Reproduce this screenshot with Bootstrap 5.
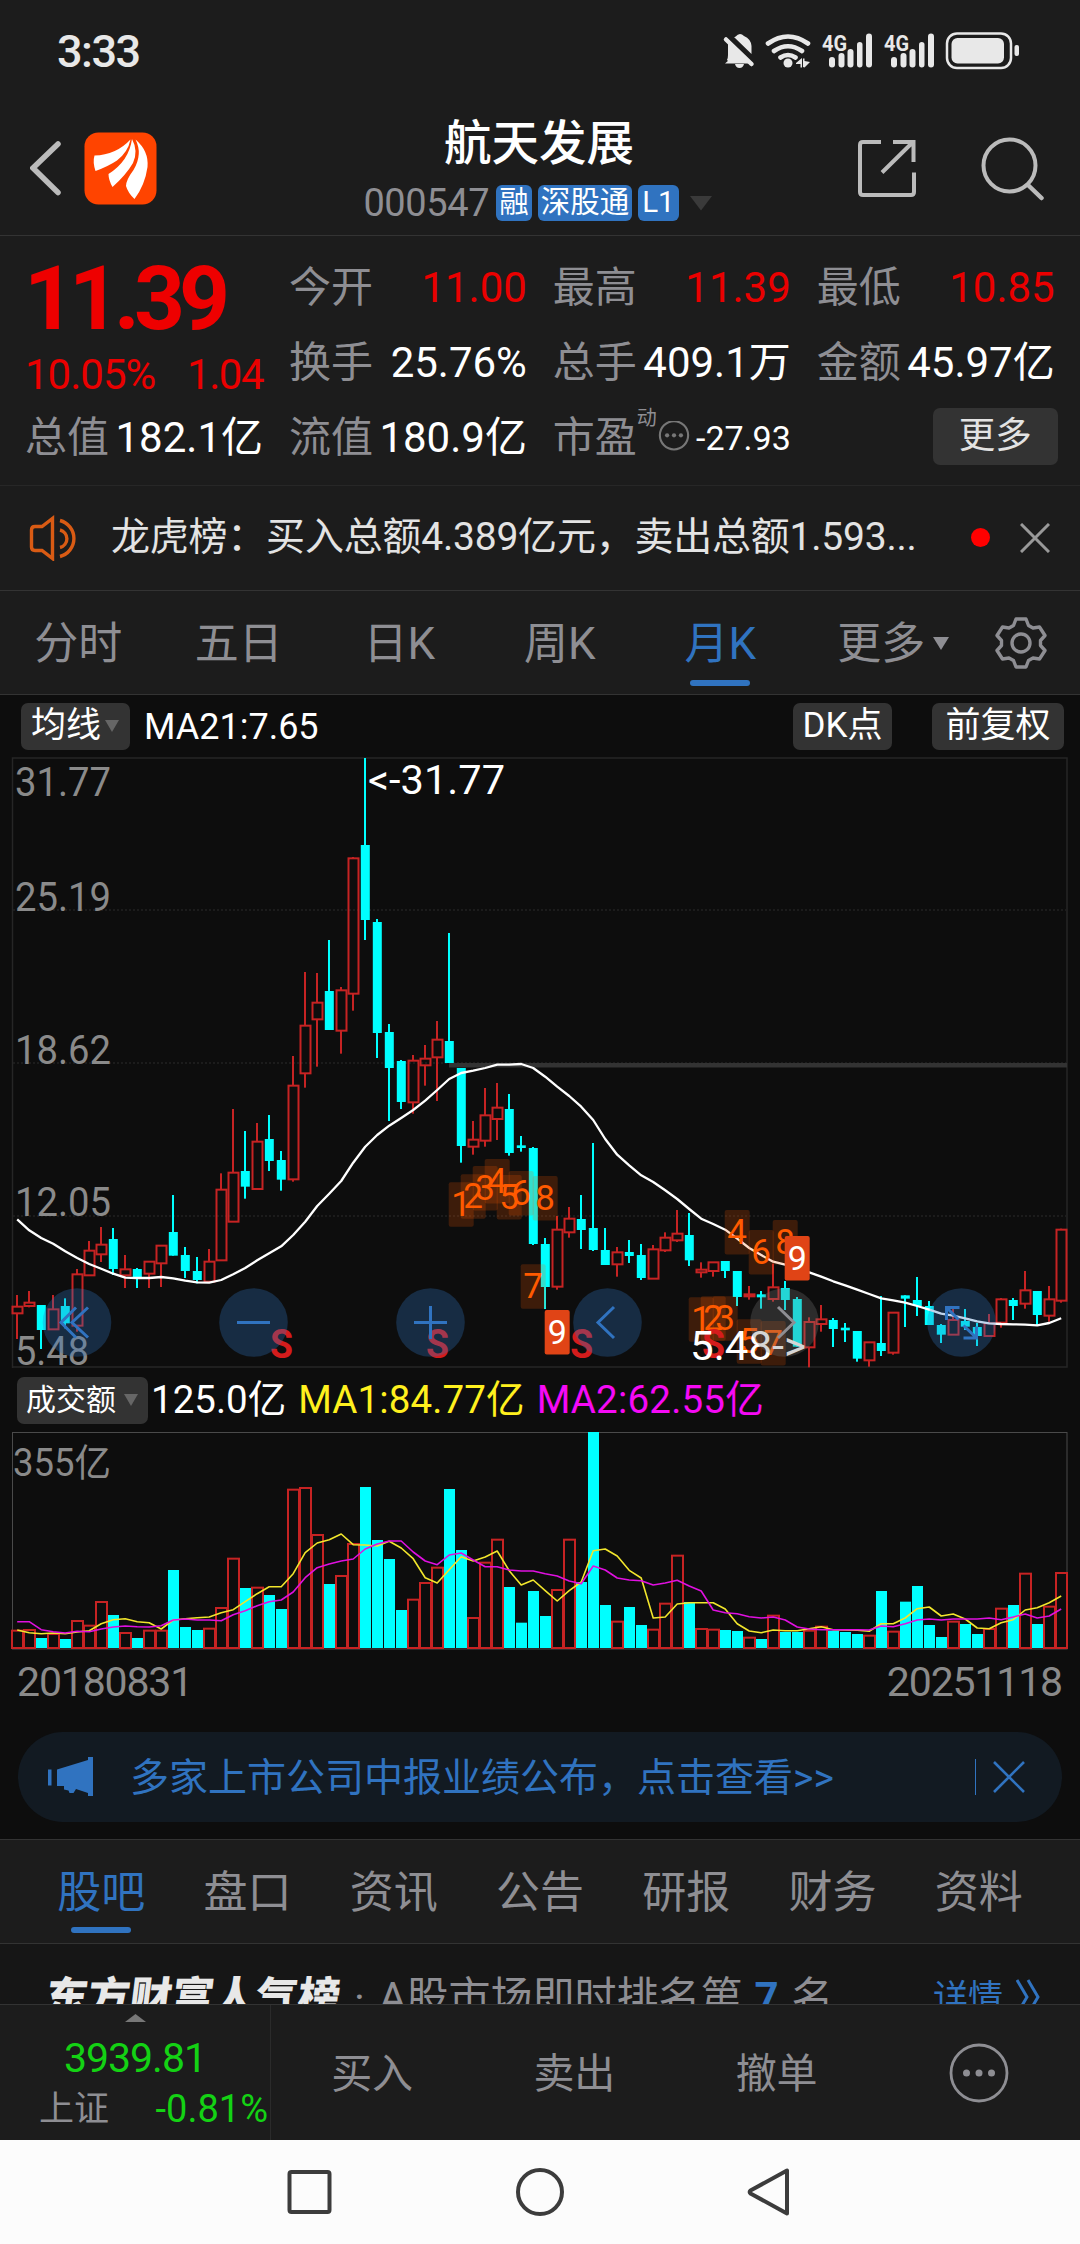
<!DOCTYPE html>
<html lang="zh-CN" data-bs-theme="dark">
<head>
<meta charset="utf-8">
<meta name="viewport" content="width=device-width, initial-scale=1">
<title>航天发展 000547</title>
<link href="https://cdn.jsdelivr.net/npm/bootstrap@5.3.0/dist/css/bootstrap.min.css" rel="stylesheet">
<style>
:root{--gray:#8e8e93;--blue:#3073c0;--line:#333}
body{width:1080px;height:2244px;margin:0;overflow:hidden;background:#1c1c1c;color:#fff;font-family:Roboto,"Noto Sans CJK SC",sans-serif;font-size:42px;line-height:1}
svg{display:block;flex:none}
.txt-gray{color:var(--gray)}.txt-blue{color:var(--blue)}.txt-red{color:#ea0000}.txt-green{color:#14d214}.txt-soft{color:#e3e3e3}
.statusbar{height:102px;padding:0 57px 0 57px}
.clock{font-size:45px;font-weight:500;color:#e8e8e8;letter-spacing:-1.5px}
.topbar{height:134px;border-bottom:1px solid var(--line);padding:0 36px 0 30px}
.title-block{margin-left:64px;margin-top:11px}
.stock-name{font-size:47.5px;font-weight:500;height:62px;line-height:62px}
.stock-code{font-size:38px;letter-spacing:-.4px}
.tag{background:var(--blue);border-radius:6px;height:36px;line-height:35px;font-size:29.5px;padding:0 3px;color:#fff}
.tri{width:0;height:0;border-left:7.5px solid transparent;border-right:7.5px solid transparent;border-top:12px solid #666}
.quote{height:250px;border-bottom:1px solid #272727;padding:14px 26px 0 25px;display:grid;grid-template-columns:238px 238px 238px 238px;column-gap:25.9px;grid-template-rows:75px 75px 75px}
.price-box{grid-row:1 / span 2;position:relative}
.price{font-size:89px;font-weight:700;letter-spacing:-6px;color:#ee0000;height:97px;line-height:97px;padding-left:1px;margin-left:-2px}
.change{font-size:42px;height:52px;line-height:56px;letter-spacing:-1px}
.small-val{font-size:34px}
.sup-mark{font-size:20px;align-self:flex-start;margin-top:8px}
.more-btn{width:125px;height:57px;line-height:50px;border-radius:7px;background:#333;font-size:36.5px;color:#e3e3e3;padding:0;border:0;margin-right:-3px;margin-top:-3px}
.notice{height:105px;border-bottom:1px solid var(--line);padding:0 30px 1px 29px;font-size:39px}
.notice-text{margin-left:28px;letter-spacing:-.22px}
.dot{width:19px;height:19px;background:#f00;border-radius:50%}
.periods{height:104px;border-bottom:1px solid var(--line);font-size:44px}
.period{width:160.5px;height:103px;position:relative;padding-top:2px;left:-2px}
.bar-mark{position:absolute;width:60px;height:6px;border-radius:3px;background:var(--blue);left:50%;margin-left:-30px;bottom:8px}
.chart-zone{background:#0d0d0d;height:1144px}
.ind-row{height:62px;padding:0 16px 0 21px}
.chip{background:#333;border-radius:7px;height:47px;font-size:35px;line-height:46px}
.vol-head{height:64px;padding-left:17px;font-size:38.5px}
.dates{height:82px;padding:0 18px 18px 17px;font-size:41px;color:#8a8a8a}
.banner{height:90px;margin:0 18px;border-radius:45px;background:#121a22;padding:0 37px 0 30px;font-size:39px}
.vline{width:1px;height:36px;background:var(--blue)}
.info-tabs{height:105px;border-top:1px solid var(--line);border-bottom:1px solid var(--line);padding:2px 28px 0;font-size:44px}
.info-tabs .bar-mark{bottom:10px}
.rank{height:60px;background:#161616;overflow:hidden;padding:33px 40px 0 46px;font-size:42px;white-space:nowrap}
.rank-title{font-weight:900;font-size:42px;color:#e8e8e8;transform:skewX(-7deg)}
.trade{height:136px;border-top:1px solid var(--line);font-size:41px;color:var(--gray)}
.index-box{width:271px;border-right:1px solid #2b2b2b}
.sysnav{height:104px;background:#fcfcfc}
</style>
</head>
<body class="d-flex flex-column">

<div class="statusbar d-flex align-items-center justify-content-between flex-shrink-0">
  <span class="clock">3:33</span>
  <svg width="302" height="44" viewBox="720 29 302 44" fill="#e8e8e8">
    <path d="M728 62V60l-4 3.5h24L727 43v12q0 3-1 5z"/><path d="M734 37q3-3 5-3t4 2q7 3 7.500 10v8L733 37z"/><path d="M734 64h9q-1 4-4.500 4t-4.500-4z"/>
    <path d="M725 39.500l25.500 24.500" stroke="#e8e8e8" stroke-width="4.500" stroke-linecap="round"/>
    <g fill="none" stroke="#e8e8e8" stroke-width="4.600" stroke-linecap="round"><path d="M767 43.500q20-14 40 0M773 51q14-9.500 28 0M779.500 57.500q7.500-5 15 0"/></g>
    <circle cx="787" cy="63" r="4.500"/><path d="M795 63l6-5v9.500h-1.500V64H795zM802 67V58.500h1.500V61L809 62l-5.500 5.500z"/>
    <g id="sig"><text x="821" y="51" font-size="22" font-weight="700" textLength="25" lengthAdjust="spacingAndGlyphs">4G</text>
    <rect x="828" y="57" width="6" height="10.500" rx="3"/><rect x="837.500" y="53" width="6" height="14.500" rx="3"/><rect x="846.500" y="49" width="6" height="18.500" rx="3"/><rect x="856" y="42" width="5.500" height="25.500" rx="2.750"/><rect x="865" y="33.500" width="6" height="34" rx="3"/></g>
    <use href="#sig" x="62"/>
    <rect x="946" y="33.500" width="64" height="34.500" rx="10" fill="none" stroke="#e8e8e8" stroke-width="2.500"/><rect x="950.500" y="38" width="52.500" height="25.500" rx="6"/><rect x="1013.500" y="45" width="4.500" height="11" rx="2"/>
  </svg>
</div>

<header class="topbar d-flex justify-content-between flex-shrink-0">
  <svg width="128" height="75" viewBox="30 131 128 75" style="margin-top:29px">
    <path d="M58 144L33 168l25 24.500" fill="none" stroke="#bbb" stroke-width="5.500" stroke-linecap="round"/>
    <rect x="84.500" y="132.500" width="72" height="72" rx="14" fill="#ff4400"/>
    <g fill="#fff"><path d="M94.500 155.500Q116 155 130.500 139.500Q128 152 117 160.500Q108 166.500 95.500 171Q92.500 162 94.500 155.500z"/><path d="M132 139Q138.500 151 133 163Q126 175 112.500 187Q108.500 180 108.500 174Q129 161 132 139z"/><path d="M135.500 139.500Q149 151 147.500 167Q145 185 134.500 199Q128 193 126 186Q126 180 133.500 170Q143 154 135.500 139.500z"/></g>
  </svg>
  <div class="title-block d-flex flex-column align-items-center">
    <div class="stock-name">航天发展</div>
    <div class="d-flex align-items-center txt-gray" style="height:56px;margin-left:-2px">
      <span class="stock-code">000547</span><span class="tag" style="margin-left:7px">融</span><span class="tag" style="margin-left:6px">深股通</span><span class="tag" style="margin-left:6px;padding:0 4px">L1</span>
      <svg width="24" height="16" viewBox="0 0 24 16" style="margin-left:10px"><path d="M1 1h22L12 15.500z" fill="#3a3a3a"/></svg>
    </div>
  </div>
  <svg width="188" height="66" viewBox="856 136 188 66" style="margin-top:34px" fill="none" stroke="#bbb" stroke-width="4">
    <path d="M881 142h-18q-3 0-3 3v47q0 3 3 3h48q3 0 3-3v-19.500"/><path d="M893 142h20.500v20M882 172.500l31-30.500"/>
    <circle cx="1009.500" cy="165.500" r="26"/><path d="M1028.500 185.500l13 12.500" stroke-width="4.500" stroke-linecap="round"/>
  </svg>
</header>

<section class="quote flex-shrink-0">
  <div class="price-box"><div class="price">11.39</div><div class="change d-flex justify-content-between txt-red"><span>10.05%</span><span style="letter-spacing:-1.500px">1.04</span></div></div>
  <div class="d-flex align-items-center justify-content-between"><span class="txt-gray">今开</span><span class="txt-red">11.00</span></div>
  <div class="d-flex align-items-center justify-content-between"><span class="txt-gray">最高</span><span class="txt-red">11.39</span></div>
  <div class="d-flex align-items-center justify-content-between"><span class="txt-gray">最低</span><span class="txt-red">10.85</span></div>
  <div class="d-flex align-items-center justify-content-between"><span class="txt-gray">换手</span><span>25.76%</span></div>
  <div class="d-flex align-items-center justify-content-between"><span class="txt-gray">总手</span><span>409.1万</span></div>
  <div class="d-flex align-items-center justify-content-between"><span class="txt-gray">金额</span><span>45.97亿</span></div>
  <div class="d-flex align-items-center justify-content-between"><span class="txt-gray">总值</span><span>182.1亿</span></div>
  <div class="d-flex align-items-center justify-content-between"><span class="txt-gray">流值</span><span>180.9亿</span></div>
  <div class="d-flex align-items-center"><span class="txt-gray">市盈</span><span class="sup-mark txt-gray">动</span>
    <svg width="34" height="34" viewBox="0 0 32 32" fill="#777"><circle cx="16" cy="13.500" r="13.300" fill="none" stroke="#777" stroke-width="2"/><circle cx="9.500" cy="13.500" r="2"/><circle cx="16" cy="13.500" r="2"/><circle cx="22.500" cy="13.500" r="2"/></svg>
    <span class="small-val ms-auto">-27.93</span></div>
  <div class="d-flex align-items-center justify-content-end"><button class="btn more-btn" type="button">更多</button></div>
</section>

<section class="notice d-flex align-items-center flex-shrink-0">
  <svg width="54" height="46" viewBox="29 514 54 46" fill="none" stroke="#d95b14" stroke-width="3.400"><path d="M52.500 517.500v40L42 549.500h-7q-3.500 0-3.500-3.500v-17q0-3.500 3.500-3.500h7zM60 519.500a18.600 18.600 0 0 1 0 36M60 529a9 9 0 0 1 0 17.500"/></svg>
  <span class="notice-text txt-soft">龙虎榜：买入总额4.389亿元，卖出总额1.593...</span>
  <span class="dot ms-auto"></span>
  <svg width="30" height="30" viewBox="0 0 30 30" style="margin-left:30px"><path d="M1 1l28 28M29 1L1 29" stroke="#999" stroke-width="3"/></svg>
</section>

<nav class="periods d-flex align-items-center txt-gray flex-shrink-0">
  <div class="period d-flex align-items-center justify-content-center">分时</div>
  <div class="period d-flex align-items-center justify-content-center">五日</div>
  <div class="period d-flex align-items-center justify-content-center">日K</div>
  <div class="period d-flex align-items-center justify-content-center">周K</div>
  <div class="period d-flex align-items-center justify-content-center txt-blue">月K<i class="bar-mark"></i></div>
  <div class="period d-flex align-items-center justify-content-center" style="padding-left:25px">更多<svg width="16" height="13" viewBox="0 0 16 13" style="margin-left:8px"><path d="M0 0h16L8 13z" fill="#8e8e93"/></svg></div>
  <svg width="56" height="56" viewBox="-28 -28 56 56" style="margin-left:30px" fill="none" stroke="#8e8e93" stroke-width="3.400" stroke-linejoin="round"><path d="M-5-24H5L7.500-17.500L12-15L18.500-16L24-7.500L19.500-2.500V2.500L24 7.500L18.500 16L12 15L7.500 17.500L5 24H-5L-7.500 17.500L-12 15L-18.500 16L-24 7.500L-19.500 2.500V-2.500L-24-7.500L-18.500-16L-12-15L-7.500-17.500z"/><circle r="9"/></svg>
</nav>

<main class="chart-zone flex-shrink-0">
  <div class="ind-row d-flex align-items-center">
    <div class="chip d-flex align-items-center" style="width:109px;padding-left:10px">均线<i class="tri" style="margin-left:4px"></i></div>
    <span style="font-size:36px;margin:2px 0 0 14px">MA21:7.65</span>
    <div class="chip text-center ms-auto" style="width:99px">DK点</div>
    <div class="chip text-center" style="width:132px;margin-left:40px">前复权</div>
  </div>
  <svg id="kline" width="1080" height="611" viewBox="0 757 1080 611"></svg>
  <div class="vol-head d-flex align-items-center">
    <div class="chip d-flex align-items-center" style="width:131px;padding-left:9px;font-size:30px">成交额<i class="tri" style="margin-left:8px"></i></div>
    <span style="margin-left:3px">125.0亿</span>
    <span style="margin-left:12px;color:#fff01e;letter-spacing:.12px">MA1:84.77亿</span>
    <span style="margin-left:12px;color:#f50af5;letter-spacing:.2px">MA2:62.55亿</span>
  </div>
  <svg id="volume" width="1080" height="218" viewBox="0 1432 1080 218"></svg>
  <div class="dates d-flex align-items-center justify-content-between"><span style="letter-spacing:-1.150px">20180831</span><span style="letter-spacing:-1.150px">20251118</span></div>
  <div class="banner d-flex align-items-center txt-blue">
    <svg width="46" height="42" viewBox="0 0 46 42" fill="#3073c0"><path d="M0 13.500h3.500v16H0zM9 13.500L40 4V1h5v39h-5v-3L28 33l-2.500 4h-4l-1-2.500-4.500-1V30H9z"/></svg>
    <span style="margin:2px 0 0 36px">多家上市公司中报业绩公布，点击查看&gt;&gt;</span>
    <i class="vline ms-auto"></i>
    <svg width="32" height="32" viewBox="0 0 32 32" style="margin-left:17px"><path d="M1 1l30 30M31 1L1 31" stroke="#3073c0" stroke-width="2.600"/></svg>
  </div>
</main>

<nav class="info-tabs nav nav-fill flex-nowrap align-items-center txt-gray flex-shrink-0">
  <div class="nav-item position-relative txt-blue h-100 d-flex align-items-center justify-content-center">股吧<i class="bar-mark"></i></div>
  <div class="nav-item">盘口</div><div class="nav-item">资讯</div><div class="nav-item">公告</div><div class="nav-item">研报</div><div class="nav-item">财务</div><div class="nav-item">资料</div>
</nav>

<section class="rank d-flex align-items-start txt-gray flex-shrink-0">
  <span class="rank-title">东方财富人气榜</span>
  <span style="margin-left:14px">·</span><span style="margin-left:14px">A股市场即时排名第</span>
  <b class="txt-blue" style="margin-left:12px">7</b><span style="margin-left:13px">名</span>
  <span class="txt-blue ms-auto" style="font-size:35px;margin-top:4px">详情</span>
  <svg width="24" height="36" viewBox="0 0 24 36" style="margin:2px 0 0 13px" fill="none" stroke="#3073c0" stroke-width="3"><path d="M1 1l10 17L1 35M12 1l10 17-10 17"/></svg>
</section>

<footer class="trade d-flex flex-shrink-0">
  <div class="index-box d-flex flex-column">
    <svg class="mx-auto" width="21" height="8" viewBox="0 0 21 8" style="margin-top:9px"><path d="M0 8L10.500 0L21 8z" fill="#777"/></svg>
    <div class="txt-green text-center" style="margin-top:16px;font-size:41px;letter-spacing:-1px">3939.81</div>
    <div class="d-flex align-items-center justify-content-between" style="padding:11px 2px 0 39px;font-size:35px"><span>上证</span><span class="txt-green" style="font-size:38px">-0.81%</span></div>
  </div>
  <div class="flex-fill d-flex align-items-center text-center">
    <span class="col-3 pt-1">买入</span><span class="col-3 pt-1">卖出</span><span class="col-3 pt-1">撤单</span>
    <span class="col-3 d-flex justify-content-center"><svg width="62" height="62" viewBox="-31 -31 62 62" fill="#8e8e93"><circle r="28" fill="none" stroke="#8e8e93" stroke-width="2.800"/><circle cx="-12.500" r="3.500"/><circle r="3.500"/><circle cx="12.500" r="3.500"/></svg></span>
  </div>
</footer>

<div class="sysnav d-flex flex-shrink-0">
  <svg width="1080" height="104" viewBox="0 2140 1080 104" fill="none" stroke="#3c3c3c" stroke-width="4"><rect x="289.500" y="2172" width="40" height="40" rx="2"/><circle cx="540" cy="2192" r="22"/><path d="M787 2170.500v43L750.500 2193.500q-1.500-1.500 0-3z" stroke-linejoin="round"/></svg>
</div>

<script src="https://cdn.jsdelivr.net/npm/bootstrap@5.3.0/dist/js/bootstrap.bundle.min.js"></script>
<script>
const RED = '#c62323', CYAN = '#00ffff', STEP = 12, X0 = 17.2;
const cx = i => X0 + STEP * i;
const py = v => 1090 + v / 3;
const vy = v => 1420 + v / 3;

// Monthly candles: direction, body top, body bottom, high, low (thirds of a pixel)
const candles = `r650,670,615,747 r638,648,603,652 c645,720,645,777 r658,718,615,718 c648,700,625,715 r553,707,537,725 r482,556,453,556 r464,493,411,516 c447,537,414,555 r538,556,495,594 c537,562,534,594 r515,551,515,594 r467,520,467,591 c426,497,315,497 c495,543,471,564 c543,570,501,580 r515,575,477,575 r299,511,250,511 r248,395,57,395 c243,290,123,326 r155,297,99,300 c147,213,75,243 c210,269,183,302 r-13,268,-102,275 r-193,-50,-354,-7 r-262,-212,-351,-70 c-297,-180,-450,-180 r-299,-178,-309,-109 r-695,-289,-699,-238 c-735,-510,-996,-450 c-504,-171,-513,-96 c-174,-66,-198,93 c-87,36,-90,57 r-88,37,-105,71 r-94,-74,-135,-13 r-151,-98,-207,33 c-147,-81,-471,-81 c-66,168,-66,218 r149,170,93,194 r76,152,-6,170 r53,87,-21,150 c57,189,12,197 c166,174,138,185 c174,462,171,465 c462,591,444,657 r419,590,378,599 r386,427,351,443 c387,420,315,477 c414,480,159,483 c480,525,414,525 r487,523,471,560 c486,498,450,519 c495,564,462,570 r478,566,465,566 r443,481,427,486 r431,451,360,456 c435,511,369,528 r539,547,517,563 r517,543,517,560 c513,543,513,564 c543,621,543,648 r613,619,588,629 c613,622,603,656 r592,627,521,635 c594,630,573,660 c627,770,621,770 r696,772,682,832 r688,702,645,725 c690,717,684,771 c713,721,699,756 c723,806,723,815 r757,811,757,830 c759,783,618,798 r668,788,668,794 c616,626,616,711 c630,648,561,678 c648,705,633,705 c705,734,702,759 r690,734,657,734 c693,710,657,720 c711,738,699,768 r700,738,672,738 r628,698,624,713 c630,648,624,690 r601,641,543,656 c603,675,603,705 r628,677,588,695 r419,632,416,638`.split(' ').map(s => [s[0], ...s.slice(1).split(',').map(Number)]);
const ma21 = [388,421,444,461,484,504,522,536,551,563,564,564,561,565,572,577,578,570,553,534,511,490,469,435,395,348,311,273,218,170,135,107,84,60,32,0,-33,-51,-58,-66,-76,-76,-78,-66,-40,-10,18,50,90,147,194,226,256,276,301,327,357,386,402,419,446,474,495,515,524,536,547,560,574,586,599,612,625,631,638,648,659,671,677,685,694,700,702,703,704,706,699,685];
const vol = [629,627,654,639,657,600,614,543,585,636,654,629,629,450,621,630,623,561,413,504,500,525,567,206,201,342,492,465,369,201,360,417,570,536,486,440,207,390,591,425,356,501,608,513,588,507,356,486,36,555,602,561,615,626,548,404,546,624,626,630,633,650,657,584,636,636,629,617,632,636,642,644,513,632,545,498,615,651,602,612,642,624,563,555,458,612,557,456];
const vma1 = [630,638,641,639,641,636,632,611,599,596,605,608,627,600,596,593,591,578,569,545,521,500,500,461,398,369,359,342,374,375,378,364,384,416,473,489,449,410,423,411,393,452,495,480,512,543,512,486,392,387,408,451,474,594,591,552,548,548,548,567,611,633,638,630,632,632,626,620,629,630,631,634,611,611,594,566,561,588,582,597,624,626,608,599,570,563,548,528];
const vma2 = [605,605,629,635,639,634,635,627,621,618,620,621,617,600,597,600,600,602,584,572,557,545,540,516,473,443,432,423,417,387,372,363,363,396,423,434,405,399,420,440,440,450,453,453,461,468,483,491,438,450,474,480,482,495,489,481,498,513,570,578,581,590,594,591,600,621,627,629,629,629,629,630,618,620,611,600,597,600,597,597,597,594,599,591,582,594,588,567];
const line = (a, f, col, w) => `<polyline points="${a.map((v, i) => cx(i).toFixed(1) + ',' + f(v).toFixed(1)).join(' ')}" fill="none" stroke="${col}" stroke-width="${w}" stroke-linejoin="round"/>`;
const label = (x, y, w, t, col, size) => `<text x="${x}" y="${y}" textLength="${w}" lengthAdjust="spacingAndGlyphs" fill="${col}" font-size="${size}">${t}</text>`;

let k = `<path d="M12.500 1368V758H1067V1367H12.500" fill="none" stroke="#262626" stroke-width="1.500"/>`;
for (const y of [910, 1063, 1216]) k += `<path d="M13 ${y}H1066" stroke="#222" stroke-width="1.500" stroke-dasharray="2 2"/>`;
k += `<rect x="449" y="1063" width="618" height="4.500" fill="#333"/>`;
candles.forEach(([d, a, b, h, l], i) => {
  const x = Math.round(cx(i) - .2);
  a = py(a); b = py(b); h = py(h); l = py(l);
  if (d === 'c') k += `<rect x="${x - 1}" y="${h}" width="2" height="${l - h}" fill="${CYAN}"/><rect x="${x - 4.2}" y="${a}" width="9" height="${b - a}" fill="${CYAN}"/>`;
  else k += `<rect x="${x - 1}" y="${h}" width="2" height="${Math.max(0, a - h)}" fill="${RED}"/><rect x="${x - 1}" y="${b}" width="2" height="${Math.max(0, l - b)}" fill="${RED}"/><rect x="${x - 4.5}" y="${a}" width="10" height="${b - a}" fill="none" stroke="${RED}" stroke-width="2"/>`;
});
k += line(ma21, py, '#fff', 2.3);
k += label(15, 796, 96, '31.77', '#8a8a8a', 41) + label(15, 911, 96, '25.19', '#8a8a8a', 41) + label(15, 1064, 96, '18.62', '#8a8a8a', 41) + label(15, 1216, 96, '12.05', '#8a8a8a', 41) + label(15, 1365, 74, '5.48', '#8a8a8a', 41);
// Sequence counters: candle index, top, digit
for (const [i, t, n] of [[37,277,1],[38,253,2],[39,228,3],[40,207,4],[41,255,5],[42,243,6],[44,258,8],[43,523,7],[57,622,1],[58,619,2],[59,619,3],[60,360,4],[61,688,5],[62,420,6],[63,693,7],[64,390,8]])
  k += `<rect x="${cx(i) - 12.5}" y="${py(t)}" width="25" height="44.500" rx="2" fill="#ff5a00" fill-opacity=".2"/><text x="${cx(i)}" y="${py(t) + 34}" text-anchor="middle" font-size="35" fill="#ff5a00">${n}</text>`;
for (const [i, t] of [[45, 660], [65, 438]])
  k += `<rect x="${cx(i) - 12.5}" y="${py(t)}" width="25" height="44.500" rx="2" fill="#e04416"/><text x="${cx(i)}" y="${py(t) + 33.5}" text-anchor="middle" font-size="34" fill="#fff">9</text>`;
for (const x of [281.5, 437.5, 581.7, 713.5]) k += `<text x="${x}" y="1357.500" text-anchor="middle" font-size="40" font-weight="700" fill="#d41c1c" textLength="23" lengthAdjust="spacingAndGlyphs">S</text>`;
k += label(368, 794, 137, '&lt;-31.77', '#fff', 40) + label(690, 1360, 116, '5.48-&gt;', '#fff', 40);
const glyphs = ['M-1-15l-15 15 15 15M11-15L-5 0l16 15', 'M-16.500 0h33', 'M-16.500 0h33M0-16.500v33', 'M6.500-15.500L-9.500 0 6.500 15.500', 'M-6.500-15.500L9.500 0-6.500 15.500', 'M-15-2.500V-15H-2M-14.500-14.500L-3-3M15 4V15.500H2M2 3l13 12.500'];
[77, 253.5, 430.5, 607.5, 784.5, 961.5].forEach((x, i) => {
  const g = i === 4;
  k += `<g transform="translate(${x} 1322.500)"><circle r="34.300" fill="${g ? '#737373' : '#3073c0'}" fill-opacity=".3"/><path d="${glyphs[i]}" fill="none" stroke="${g ? '#8e8e93' : '#3073c0'}" stroke-width="3"/></g>`;
});
document.getElementById('kline').innerHTML = k;

let v = `<rect x="12.500" y="1432.500" width="1054.500" height="216.500" fill="none" stroke="#4a4a4a"/>`;
vol.forEach((t, i) => {
  const x = Math.round(cx(i) - .2), y = vy(t);
  v += candles[i][0] === 'c' ? `<rect x="${x - 5}" y="${y}" width="11" height="${1648 - y}" fill="${CYAN}"/>` : `<rect x="${x - 5}" y="${y + 1}" width="11" height="${1647 - y}" fill="none" stroke="${RED}" stroke-width="2"/>`;
});
v += line(vma1, vy, '#f2e62c', 1.6) + line(vma2, vy, '#e010e0', 1.6) + label(13, 1476, 98, '355亿', '#8a8a8a', 38);
document.getElementById('volume').innerHTML = v;
</script>
</body>
</html>
